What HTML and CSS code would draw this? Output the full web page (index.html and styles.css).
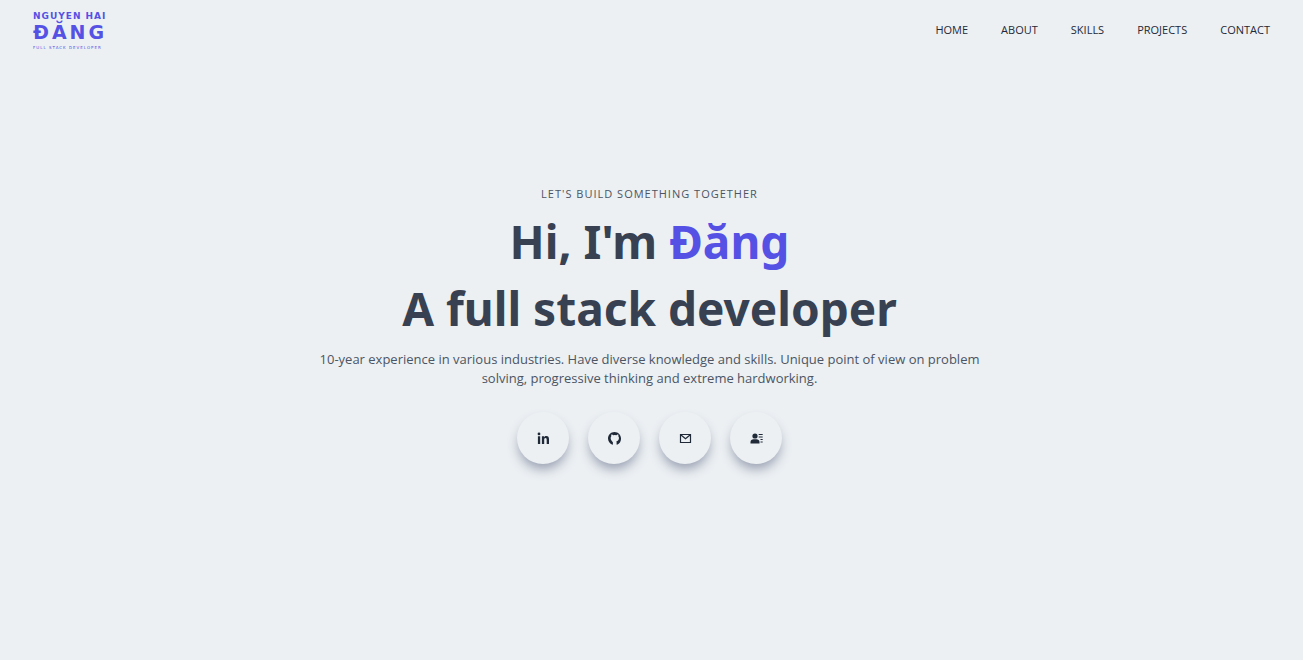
FILE: index.html
```
<!DOCTYPE html>
<html lang="en">
<head>
<meta charset="utf-8">
<meta name="viewport" content="width=device-width, initial-scale=1">
<title>Nguyen Hai Đăng</title>
<link rel="stylesheet" href="styles.css">
</head>
<body>
<header class="header">
  <a class="logo" href="#home">
    <span class="logo-top">NGUYEN HAI</span>
    <span class="logo-name">ĐĂNG</span>
    <span class="logo-role">FULL STACK DEVELOPER</span>
  </a>
  <nav class="nav">
    <a href="#home">HOME</a>
    <a href="#about">ABOUT</a>
    <a href="#skills">SKILLS</a>
    <a href="#projects">PROJECTS</a>
    <a href="#contact">CONTACT</a>
  </nav>
</header>
<main class="hero" id="home">
  <p class="eyebrow">LET'S BUILD SOMETHING TOGETHER</p>
  <h1 class="title">Hi, I'm <span class="accent">Đăng</span></h1>
  <h1 class="title">A full stack developer</h1>
  <p class="intro">10-year experience in various industries. Have diverse knowledge and skills. Unique point of view on problem solving, progressive thinking and extreme hardworking.</p>
  <div class="socials">
    <a class="social" href="#linkedin" aria-label="LinkedIn">
      <svg viewBox="0 0 13 13"><circle cx="2" cy="1.900" r="1.400"/><path d="M.9 4.300h2.300V12H.9zM4.900 4.300H7v1.100c.5-.8 1.300-1.300 2.300-1.300 2 0 2.700 1.200 2.700 3.300V12H9.700V7.900c0-1.100-.2-1.800-1.200-1.800S7.200 6.900 7.200 7.900V12H4.900z"/></svg>
    </a>
    <a class="social" href="#github" aria-label="GitHub">
      <svg viewBox="0 0 16 16"><path d="M8 0C3.580 0 0 3.580 0 8c0 3.540 2.290 6.530 5.470 7.590.4.070.55-.17.55-.38V12.600C5 11.500 3 9.500 3.300 7.400c0-.9.300-1.600.8-2.150-.08-.2-.36-1.020.08-2.120 0 0 .67-.21 2.200.82a7.600 7.600 0 0 1 4 0c1.530-1.040 2.200-.82 2.200-.82.44 1.100.16 1.920.08 2.120.51.56.82 1.270.82 2.150 0 2.400-1.300 3.900-3.200 4.100.29.25.3.730.3 1.480v2.230c0 .21.15.46.55.38A8 8 0 0 0 16 8c0-4.420-3.580-8-8-8z"/></svg>
    </a>
    <a class="social" href="#mail" aria-label="Email">
      <svg viewBox="0 0 13 13"><path class="line" d="M1.500 2.500h10v8h-10zM2 3l4.500 3.800L11 3"/></svg>
    </a>
    <a class="social" href="#contact" aria-label="Contact">
      <svg viewBox="0 0 13 13"><circle cx="5" cy="4" r="2.600"/><path d="M.5 11.500V10c0-1.800 1.500-2.800 3-2.800h3c1.500 0 3 1 3 2.800v1.500z"/><path class="thin" d="M8.700 2.500h4M8.700 5h4M10.500 7.500h2.200M10.500 10h2.200"/></svg>
    </a>
  </div>
</main>
</body>
</html>
```
FILE: styles.css
```
* {
  box-sizing: border-box;
}

body {
  margin: 0;
  min-height: 100vh;
  display: flex;
  flex-direction: column;
  background: #ecf0f3;
  color: #1f2937;
  font-family: "Open Sans", "Noto Sans", sans-serif;
}

a {
  color: inherit;
  text-decoration: none;
}

.header {
  display: flex;
  align-items: center;
  justify-content: space-between;
  height: 60px;
  padding: 0 33px;
}

.logo {
  display: flex;
  flex-direction: column;
  padding-top: 3px;
  color: #5651e5;
  font-family: "DejaVu Sans", sans-serif;
  font-weight: bold;
  white-space: nowrap;
}

.logo-top {
  font-size: 9px;
  line-height: 10px;
  letter-spacing: 1px;
}

.logo-name {
  font-size: 19px;
  line-height: 22px;
  letter-spacing: 3px;
}

.logo-role {
  font-size: 4px;
  line-height: 10px;
  font-weight: normal;
  letter-spacing: 1px;
}

.nav {
  display: flex;
  gap: 33px;
  font-size: 11px;
  line-height: 16px;
}

.hero {
  flex: 1;
  display: flex;
  flex-direction: column;
  align-items: center;
  justify-content: center;
  padding: 0 20px 70px 16px;
  text-align: center;
}

.eyebrow {
  margin: 0 0 6px;
  font-size: 11px;
  line-height: 16px;
  letter-spacing: 1px;
  color: #4b5563;
}

.title {
  margin: 0;
  padding: 8px 0;
  font-family: "Noto Sans", sans-serif;
  font-size: 46px;
  line-height: 51px;
  font-weight: bold;
  color: #374151;
}

.accent {
  color: #5651e5;
}

.intro {
  max-width: 680px;
  margin: 8px 0 0;
  font-size: 13px;
  line-height: 19px;
  color: #4b5563;
}

.socials {
  display: flex;
  gap: 19px;
  padding-top: 24px;
}

.social {
  display: grid;
  place-items: center;
  width: 52px;
  height: 52px;
  border-radius: 50%;
  box-shadow: 0 7px 12px -2px #979eb0;
  background: #ecf0f3;
}

.social svg {
  width: 13px;
  height: 13px;
  fill: #1f2937;
}

.social .line,
.social .thin {
  fill: none;
  stroke: #1f2937;
  stroke-width: 1.2;
}

.social .thin {
  stroke-width: 1;
}
```
